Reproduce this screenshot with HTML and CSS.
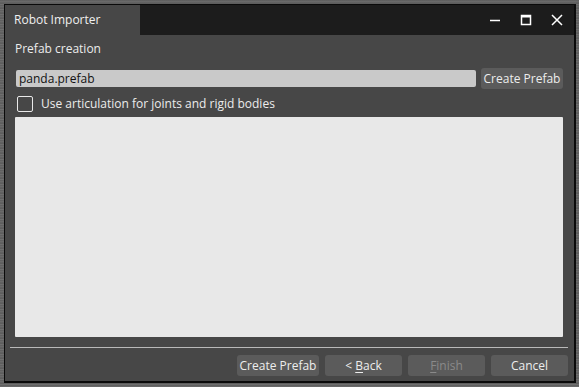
FILE: index.html
```html
<!DOCTYPE html>
<html>
<head>
<meta charset="utf-8">
<link rel="stylesheet" href="styles.css">
</head>
<body>
<div class="desktop">
  <div class="window">
    <div class="titlebar">
      <div class="title-tab">Robot Importer</div>
      <div class="title-fill">
        <svg class="ctl" width="14" height="14" viewBox="0 0 14 14"><path d="M2 7.5h10" stroke="#fff" stroke-width="1.5"/></svg>
        <svg class="ctl" width="14" height="14" viewBox="0 0 14 14"><rect x="2.5" y="2.5" width="9" height="9" fill="none" stroke="#fff" stroke-width="1.5"/><path d="M2.5 3.5h9" stroke="#fff" stroke-width="2"/></svg>
        <svg class="ctl" width="14" height="14" viewBox="0 0 14 14"><path d="M2 2l10 10M12 2L2 12" stroke="#fff" stroke-width="1.5"/></svg>
      </div>
    </div>
    <div class="content">
      <div class="section-label">Prefab creation</div>
      <div class="row">
        <div class="input">panda.prefab</div>
        <button class="btn btn-small">Create Prefab</button>
      </div>
      <label class="check-row"><span class="checkbox"></span><span>Use articulation for joints and rigid bodies</span></label>
      <div class="panel"></div>
    </div>
    <div class="separator"></div>
    <div class="footer">
      <button class="btn btn-wide">Create Prefab</button>
      <button class="btn">&lt; <u>B</u>ack</button>
      <button class="btn disabled"><u>F</u>inish</button>
      <button class="btn">Cancel</button>
    </div>
  </div>
</div>
</body>
</html>
```

FILE: styles.css
```css
html, body {
  margin: 0;
  padding: 0;
}
body {
  width: 579px;
  height: 387px;
  overflow: hidden;
  font-family: "Open Sans", "Noto Sans", sans-serif;
  font-size: 12px;
}
.desktop {
  width: 579px;
  height: 387px;
  padding: 4px 0 0 4px;
  box-sizing: border-box;
  background: repeating-linear-gradient(180deg, #5c5c5c 0px, #6e6e6e 2px, #555 3px, #777 5px);
}
.window {
  width: 572px;
  height: 379px;
  box-sizing: border-box;
  border: 1px solid #0a0a0a;
  border-right-width: 2px;
  border-bottom-width: 2px;
  background: #474747;
  display: flex;
  flex-direction: column;
}
.titlebar {
  height: 30px;
  display: flex;
  background: #1c1c1c;
}
.title-tab {
  width: 135px;
  background: #474747;
  color: #f0f0f0;
  padding-left: 9px;
  box-sizing: border-box;
  line-height: 29px;
  font-size: 12px;
}
.title-fill {
  flex: 1;
  display: flex;
  justify-content: flex-end;
  align-items: center;
  gap: 17px;
  padding-right: 10px;
}
.content {
  padding: 6px 10px 0 10px;
  display: flex;
  flex-direction: column;
}
.section-label {
  color: #ececec;
  height: 26px;
  line-height: 16px;
}
.row {
  display: flex;
  align-items: center;
  margin-top: 1px;
  gap: 5px;
  padding-left: 1px;
}
.input {
  width: 460px;
  height: 17px;
  box-sizing: border-box;
  background: #c9c9c9;
  color: #111;
  border-radius: 2px;
  padding-left: 3px;
  line-height: 17px;
  font-size: 12px;
}
.btn {
  font-family: inherit;
  font-size: 12px;
  color: #ededed;
  background: #5b5b5b;
  border: none;
  border-radius: 3px;
  height: 21px;
  width: 77px;
  padding: 0;
  line-height: 21px;
}
.btn-small, .btn-wide {
  width: 82px;
}
.btn u {
  text-decoration-thickness: 1px;
  text-underline-offset: 2px;
}
.btn.disabled {
  color: #8a8a8a;
}
.check-row {
  display: flex;
  align-items: center;
  gap: 8px;
  color: #ececec;
  margin-top: 6px;
  padding-left: 2px;
  height: 17px;
}
.checkbox {
  width: 16px;
  height: 16px;
  box-sizing: border-box;
  border: 1px solid #e8e8e8;
  border-radius: 2px;
}
.panel {
  margin-top: 5px;
  width: 548px;
  height: 220px;
  background: #e8e8e8;
  border-radius: 1px;
}
.separator {
  margin: 10px 6px 0 5px;
  height: 1px;
  background: #b9b9b9;
}
.footer {
  display: flex;
  justify-content: flex-end;
  gap: 6px;
  padding: 7px 6px 0 0;
}
```
